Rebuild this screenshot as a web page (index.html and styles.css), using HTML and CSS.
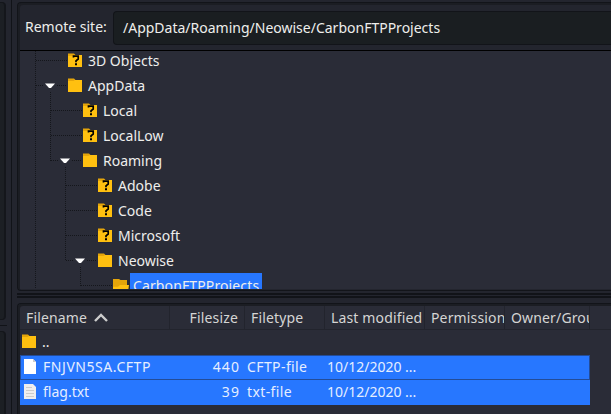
FILE: index.html
```html
<!DOCTYPE html>
<html lang="en">
<head>
<meta charset="utf-8">
<title>Remote site</title>
<link rel="stylesheet" href="styles.css">
</head>
<body>
<svg class="defs" width="0" height="0">
  <defs>
    <symbol id="folder" viewBox="0 0 14 14"><path fill="#e5a50a" d="M0 1V.6H6L7.5 2H14V6H0Z"/><path fill="#ffc010" d="M0 3H5.5L7 2H14V14H0Z"/></symbol>
    <symbol id="unknown" viewBox="0 0 14 14"><use href="#folder"/><path fill="none" stroke="#000" stroke-width="1.7" d="M5.5 4.5V3.2H10.2V6L8 7.8V9.2"/><path d="M7 10.3h2v2H7z"/></symbol>
    <symbol id="open" viewBox="0 0 16 14"><path fill="#e5a50a" d="M0 1H6L7.5 2H14V14H0Z"/><path fill="#ffc010" d="M0 14V8.7H5L7 7H16L15 14Z"/></symbol>
    <symbol id="arrow" viewBox="0 0 10 6"><path fill="#fff" d="M0 .5H10L6 5H4Z"/></symbol>
  </defs>
</svg>
<div class="window">
  <aside class="local">
    <div class="local-top"></div>
    <div class="local-bottom"></div>
  </aside>
  <main class="remote">
    <section class="panel site">
      <div class="address">
        <span class="label">Remote site:</span>
        <div class="path"><span>/AppData/Roaming/Neowise/CarbonFTPProjects</span></div>
      </div>
      <div class="tree">
        <svg class="guides" width="140" height="238" viewBox="20 51 140 238">
          <path d="M35.5 51V289M50.5 92V161M65.5 167V261M80.5 267V286M36 60.5H67M36 85.5H44M57 85.5H67M51 110.5H82M51 135.5H82M51 160.5H59M72 160.5H82M66 185.5H97M66 210.5H97M66 235.5H97M66 260.5H74M87 260.5H97M81 285.5H112"/>
        </svg>
        <div class="node l1"><svg class="icon"><use href="#unknown"/></svg><span>3D Objects</span></div>
        <div class="node l1 expanded"><svg class="arrow"><use href="#arrow"/></svg><svg class="icon"><use href="#folder"/></svg><span>AppData</span></div>
        <div class="node l2"><svg class="icon"><use href="#unknown"/></svg><span>Local</span></div>
        <div class="node l2"><svg class="icon"><use href="#unknown"/></svg><span>LocalLow</span></div>
        <div class="node l2 expanded"><svg class="arrow"><use href="#arrow"/></svg><svg class="icon"><use href="#folder"/></svg><span>Roaming</span></div>
        <div class="node l3"><svg class="icon"><use href="#unknown"/></svg><span>Adobe</span></div>
        <div class="node l3"><svg class="icon"><use href="#unknown"/></svg><span>Code</span></div>
        <div class="node l3"><svg class="icon"><use href="#unknown"/></svg><span>Microsoft</span></div>
        <div class="node l3 expanded"><svg class="arrow"><use href="#arrow"/></svg><svg class="icon"><use href="#folder"/></svg><span>Neowise</span></div>
        <div class="node l4"><svg class="icon open"><use href="#open"/></svg><span class="current">CarbonFTPProjects</span></div>
      </div>
    </section>
    <div class="splitter"></div>
    <section class="panel files">
      <div class="row head">
        <div class="name"><span>Filename</span><svg class="sort" viewBox="0 0 14 9"><path fill="none" stroke="#ccc" stroke-width="2.4" d="M1 8L7 2L13 8"/></svg></div>
        <div class="size">Filesize</div><div class="type">Filetype</div><div class="date">Last modified</div><div class="perm">Permission</div><div class="owner">Owner/Group</div>
      </div>
      <div class="row"><div class="name"><svg class="icon"><use href="#folder"/></svg><span class="parent">..</span></div></div>
      <div class="row selected focused">
        <div class="name"><svg class="file" viewBox="0 0 12 15"><path fill="#fff" d="M0 0H9L12 3V15H0Z"/><path fill="#ccc" d="M9 0V3H12Z"/></svg><span class="cftp">FNJVN5SA.CFTP</span></div>
        <div class="size">440</div><div class="type">CFTP-file</div><div class="date">10/12/2020 ...</div>
      </div>
      <div class="row selected">
        <div class="name"><svg class="file" viewBox="0 0 12 15"><path fill="#eee" d="M0 0H9L12 3V15H0Z"/><path stroke="#ccc" d="M2 3.5H8M2 6.5H10M2 9.5H10M2 12.5H10"/></svg><span>flag.txt</span></div>
        <div class="size">39</div><div class="type">txt-file</div><div class="date">10/12/2020 ...</div>
      </div>
    </section>
  </main>
</div>
</body>
</html>
```
FILE: styles.css
```css
* { box-sizing: border-box; }
body {
  margin: 0;
  overflow: hidden;
  background: #23252e;
  color: #eeeeec;
  font: 14px/25px "Noto Sans", sans-serif;
}
svg { display: block; flex: none; }
.defs { position: absolute; }
.window { display: flex; width: 611px; height: 414px; }
.local { width: 12px; flex: none; border-right: 1px solid #111318; }
.local-top, .local-bottom {
  width: 6px;
  border: 1px solid #14161b;
  border-left: 0;
  border-right-width: 2px;
  background: #1c1f24;
}
.local-top { height: 318px; margin-top: 2px; border-radius: 0 4px 4px 0; }
.local-bottom { height: 90px; margin-top: 11px; border-radius: 0 4px 0 0; position: relative; }
.local-bottom::before { content: ""; position: absolute; top: -7px; left: 0; width: 7px; height: 1px; background: #111318; }
.remote { flex: 1; min-width: 0; padding: 2px 0 0 5px; }
.panel {
  border: 1px solid #121419;
  border-right: 0;
  border-radius: 4px 0 0 4px;
  box-shadow: inset 2px 2px #1b1d23;
  padding: 2px 0 0 2px;
  overflow: hidden;
}
.site { height: 289px; }
.address {
  display: flex;
  align-items: center;
  height: 46px;
  padding: 6px 0 5px 5px;
  border-bottom: 1px solid #000;
}
.label { width: 88px; line-height: 29px; margin-top: -3px; white-space: nowrap; }
.path {
  flex: 1;
  height: 34px;
  padding-left: 9px;
  line-height: 31px;
  border: 1px solid #121419;
  border-right: 0;
  border-radius: 4px 0 0 4px;
  background: #1a1e21;
}
.tree { height: 238px; overflow: hidden; position: relative; background: #2a2c37; }
.tree .node:nth-of-type(1) { margin-top: -3px; }
.guides { position: absolute; left: 0; top: 0; }
.guides path { fill: none; stroke: #14161b; stroke-dasharray: 1 1; }
.node { display: flex; align-items: center; height: 25px; white-space: nowrap; }
.node span { position: relative; }
.icon { width: 14px; height: 14px; margin: -2px 6px 0 0; }
.l1 { padding-left: 48px; }
.l2 { padding-left: 63px; }
.l3 { padding-left: 78px; }
.l4 { padding-left: 93px; }
.arrow { width: 10px; height: 6px; margin: 0 13px 0 -23px; }
.open { width: 16px; margin-right: 1px; }
.current { padding: 0 3px; letter-spacing: .12px; background: #2777ff; }
.splitter { height: 12px; border-top: 2px solid transparent; background: linear-gradient(#111318 2px, #23252e 2px 3px, #111318 3px 5px, transparent 5px) no-repeat; }
.files { height: 114px; background: #2a2c37; }
.row { display: flex; width: 570px; height: 25px; line-height: 23px; white-space: nowrap; }
.head { width: auto; height: 24px; line-height: 24px; border-bottom: 1px solid #22242d; color: #d5d5d4; }
.head > div { border-right: 1px solid #22242d; letter-spacing: .15px; }
.name { display: flex; align-items: center; width: 150px; height: 23px; padding-left: 2px; flex: none; }
.head .name { padding-left: 6px; }
.sort { width: 14px; height: 9px; margin-left: 7px; }
.size { width: 75px; padding-right: 6px; text-align: right; }
.selected .size { letter-spacing: 1.1px; padding-right: 5px; }
.cftp { letter-spacing: .55px; }
.type { width: 80px; padding-left: 2px; letter-spacing: .4px; }
.date { width: 100px; padding-left: 2px; }
.perm { width: 80px; }
.owner { width: 85px; }
.row > div { overflow: hidden; flex: none; }
.head .type, .head .date, .head .perm, .head .owner { padding-left: 6px; }
.selected { background: #2777ff; color: #e5eeff; }
.focused { line-height: 21px; border: 1px solid #234c98; }
.focused .name { height: 21px; margin-left: -1px; }
.focused .type, .focused .date { position: relative; }
.file { width: 12px; height: 15px; margin: 0 7px 0 2px; }
```
